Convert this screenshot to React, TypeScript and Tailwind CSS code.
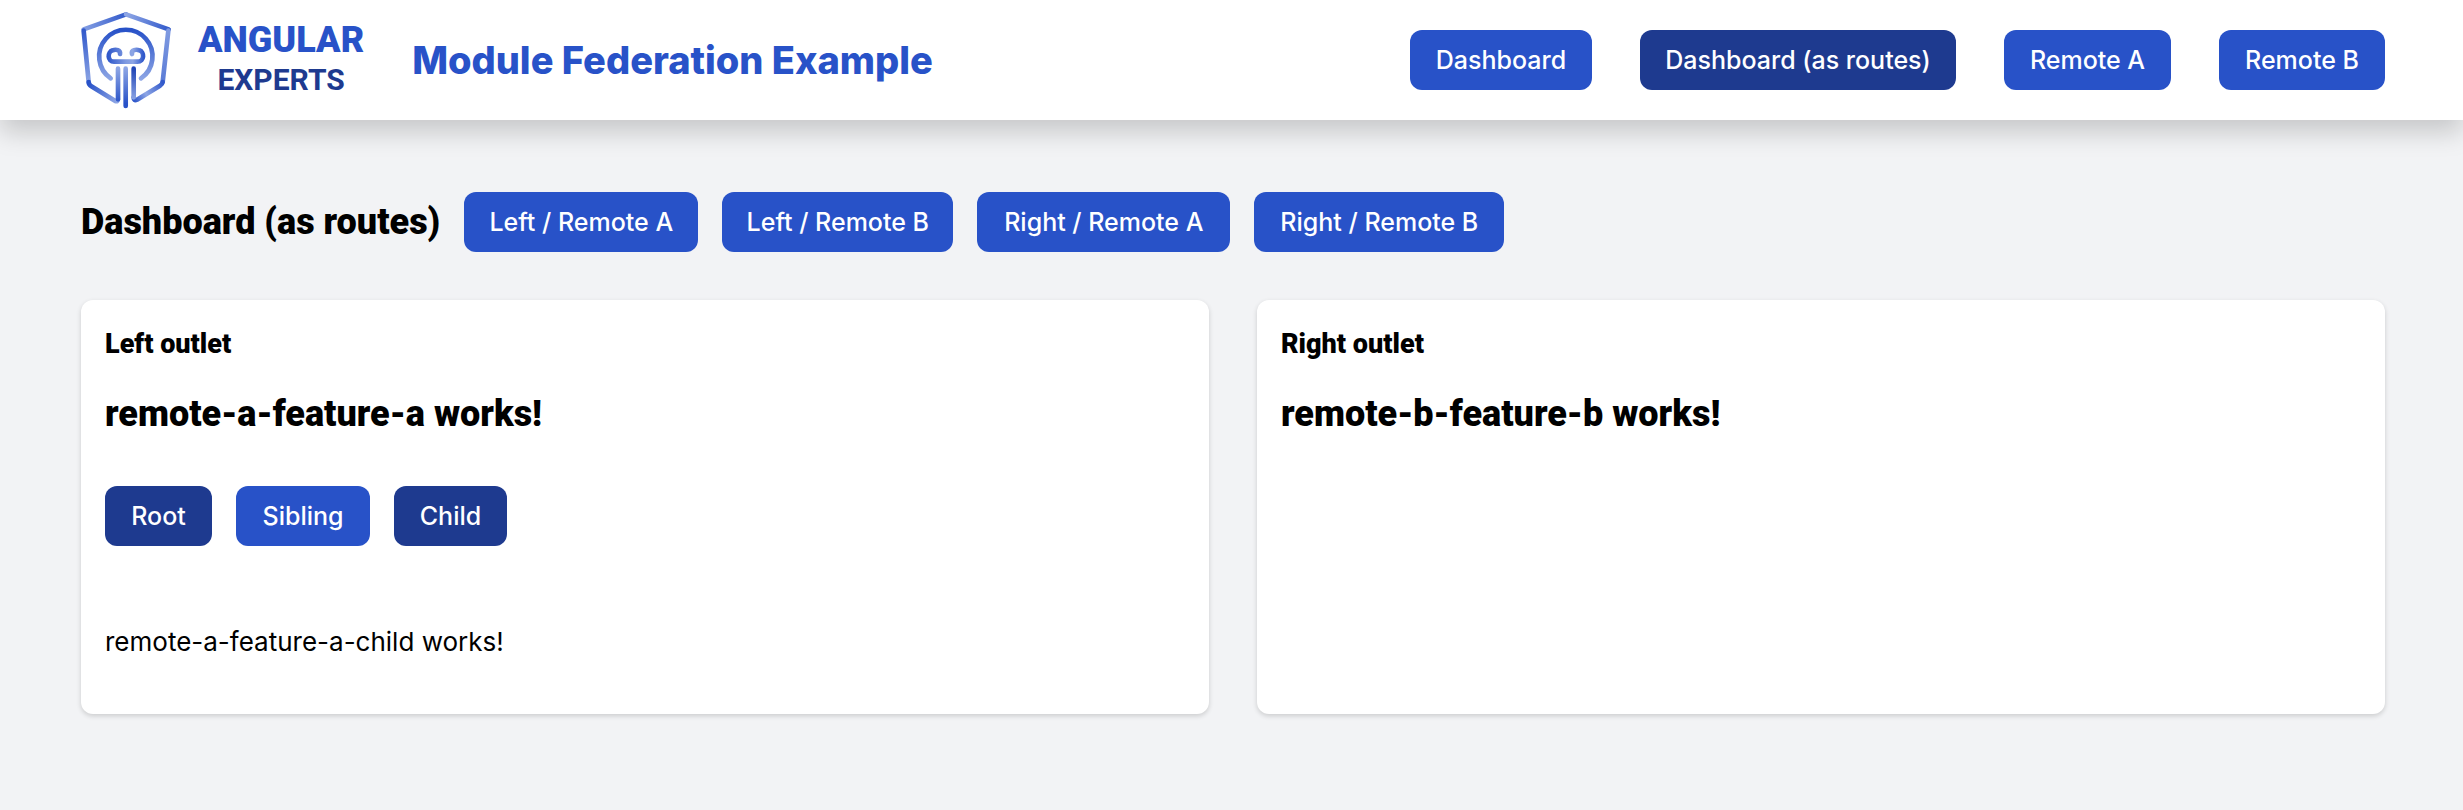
import { clsx } from 'clsx';

interface NavItem {
  label: string;
  active?: boolean;
  width: string;
}

const mainNav: NavItem[] = [
  { label: 'Dashboard', width: 'min-w-[182px]' },
  { label: 'Dashboard (as routes)', active: true, width: 'min-w-[316px]' },
  { label: 'Remote A', width: 'min-w-[167px]' },
  { label: 'Remote B', width: 'min-w-[166px]' },
];

const outletNav: NavItem[] = [
  { label: 'Left / Remote A', width: 'min-w-[234px]' },
  { label: 'Left / Remote B', width: 'min-w-[231px]' },
  { label: 'Right / Remote A', width: 'min-w-[253px]' },
  { label: 'Right / Remote B', width: 'min-w-[250px]' },
];

const featureNav: NavItem[] = [
  { label: 'Root', active: true, width: 'min-w-[107px]' },
  { label: 'Sibling', width: 'min-w-[134px]' },
  { label: 'Child', active: true, width: 'min-w-[113px]' },
];

const NavLink = ({ item }: { item: NavItem }) => (
  <a
    href="#"
    aria-current={item.active ? 'page' : undefined}
    className={clsx(
      'flex h-[60px] items-center justify-center whitespace-nowrap rounded-xl px-5 text-[25px] font-medium leading-9 text-white',
      item.width,
      item.active ? 'bg-[#1e3a8f]' : 'bg-[#2852c8]'
    )}
  >
    {item.label}
  </a>
);

const Logo = () => (
  <svg
    viewBox="60 30 276 300"
    className="h-[100px] w-[92px] shrink-0"
    fill="none"
    strokeWidth="14"
    strokeLinecap="round"
    strokeLinejoin="round"
    aria-hidden="true"
  >
    <defs>
      <linearGradient id="topLeft" gradientUnits="userSpaceOnUse" x1="70" y1="90" x2="200" y2="42">
        <stop offset="0" stopColor="#86a0e3" />
        <stop offset="1" stopColor="#3159cb" />
      </linearGradient>
      <linearGradient id="topRight" gradientUnits="userSpaceOnUse" x1="200" y1="42" x2="328" y2="90">
        <stop offset="0" stopColor="#8ea6e5" />
        <stop offset="1" stopColor="#3159cb" />
      </linearGradient>
      <linearGradient id="sideLeft" gradientUnits="userSpaceOnUse" x1="70" y1="90" x2="86" y2="250">
        <stop offset="0" stopColor="#3159cb" />
        <stop offset="1" stopColor="#8ea6e5" />
      </linearGradient>
      <linearGradient id="sideRight" gradientUnits="userSpaceOnUse" x1="325" y1="90" x2="309" y2="250">
        <stop offset="0" stopColor="#7f9ae1" />
        <stop offset="1" stopColor="#5a7bd6" />
      </linearGradient>
      <linearGradient id="footLeft" gradientUnits="userSpaceOnUse" x1="86" y1="250" x2="172" y2="305">
        <stop offset="0" stopColor="#2852c8" />
        <stop offset="1" stopColor="#8ea6e5" />
      </linearGradient>
      <linearGradient id="footRight" gradientUnits="userSpaceOnUse" x1="309" y1="250" x2="224" y2="302">
        <stop offset="0" stopColor="#3159cb" />
        <stop offset="0.6" stopColor="#8ea6e5" />
        <stop offset="1" stopColor="#3159cb" />
      </linearGradient>
      <linearGradient id="head" gradientUnits="userSpaceOnUse" x1="198" y1="90" x2="198" y2="240">
        <stop offset="0" stopColor="#2852c8" />
        <stop offset="1" stopColor="#8ea6e5" />
      </linearGradient>
      <linearGradient id="curl" gradientUnits="userSpaceOnUse" x1="145" y1="160" x2="250" y2="160">
        <stop offset="0" stopColor="#3159cb" />
        <stop offset="0.5" stopColor="#7f9ae1" />
        <stop offset="0.7" stopColor="#8ea6e5" />
        <stop offset="1" stopColor="#3159cb" />
      </linearGradient>
      <linearGradient id="pillarUp" gradientUnits="userSpaceOnUse" x1="0" y1="205" x2="0" y2="310">
        <stop offset="0" stopColor="#8ea6e5" />
        <stop offset="1" stopColor="#2852c8" />
      </linearGradient>
      <linearGradient id="pillarDown" gradientUnits="userSpaceOnUse" x1="0" y1="205" x2="0" y2="300">
        <stop offset="0" stopColor="#1f44b5" />
        <stop offset="1" stopColor="#8ea6e5" />
      </linearGradient>
    </defs>
    <path d="M71 88L198 43" stroke="url(#topLeft)" />
    <path d="M198 43L326 88" stroke="url(#topRight)" />
    <path d="M71 92L86 246" stroke="url(#sideLeft)" />
    <path d="M325 92L308 246" stroke="url(#sideRight)" />
    <path d="M86 246Q86 254 94 259L166 303Q174 306 174 298" stroke="url(#footLeft)" />
    <path d="M308 246Q307 253 300 257L231 299Q221 304 221 292" stroke="url(#footRight)" />
    <path d="M152 235A80 80 0 1 1 243 235" stroke="url(#head)" />
    <path
      d="M180 162C182 150 168 147 158 151C141 156 142 185 162 185H232C254 185 254 156 238 151C228 147 213 150 216 162"
      stroke="url(#curl)"
    />
    <path d="M174 206L174.1 298" stroke="url(#pillarUp)" />
    <path d="M197 206L197.1 318" stroke="url(#pillarUp)" />
    <path d="M221 206L221.1 292" stroke="url(#pillarDown)" />
  </svg>
);

export default function App() {
  return (
    <div className="min-h-screen bg-[#f2f3f5] font-[Inter,sans-serif] text-2xl text-black">
      <header className="flex h-[120px] items-center justify-between bg-white pl-20 pr-[78px] shadow-[0_12px_24px_rgba(0,0,0,0.18)]">
        <div className="flex items-center">
          <Logo />
          <div className="ml-[26px] flex flex-col items-center font-[Roboto,sans-serif] font-bold">
            <span className="text-4xl font-black leading-10 text-[#2852c8]">ANGULAR</span>
            <span className="text-3xl leading-10 text-[#1e3a8f]">EXPERTS</span>
          </div>
          <span className="ml-12 whitespace-nowrap text-[38px] font-extrabold leading-[54px] text-[#2852c8]">
            Module Federation Example
          </span>
        </div>
        <nav className="flex gap-12">
          {mainNav.map((item) => (
            <NavLink key={item.label} item={item} />
          ))}
        </nav>
      </header>

      <main className="pb-24 pl-[81px] pr-[78px] pt-[72px]">
        <div className="flex items-center gap-6">
          <h1 className="whitespace-nowrap font-[Roboto,sans-serif] text-4xl font-black">Dashboard (as routes)</h1>
          <nav className="flex gap-6">
            {outletNav.map((item) => (
              <NavLink key={item.label} item={item} />
            ))}
          </nav>
        </div>

        <div className="mt-12 grid grid-cols-2 gap-12">
          <section className="rounded-xl bg-white p-6 shadow-[0_2px_5px_rgba(0,0,0,0.16)]">
            <h2 className="font-[Roboto,sans-serif] text-[27px] font-black leading-10">Left outlet</h2>
            <h3 className="mt-6 font-[Roboto,sans-serif] text-4xl font-black leading-[52px]">
              remote-a-feature-a works!
            </h3>
            <nav className="mt-[46px] flex gap-6">
              {featureNav.map((item) => (
                <NavLink key={item.label} item={item} />
              ))}
            </nav>
            <p className="mb-[30px] mt-[78px] text-[26px] leading-9">remote-a-feature-a-child works!</p>
          </section>

          <section className="rounded-xl bg-white p-6 shadow-[0_2px_5px_rgba(0,0,0,0.16)]">
            <h2 className="font-[Roboto,sans-serif] text-[27px] font-black leading-10">Right outlet</h2>
            <h3 className="mt-6 font-[Roboto,sans-serif] text-4xl font-black leading-[52px]">
              remote-b-feature-b works!
            </h3>
          </section>
        </div>
      </main>
    </div>
  );
}
